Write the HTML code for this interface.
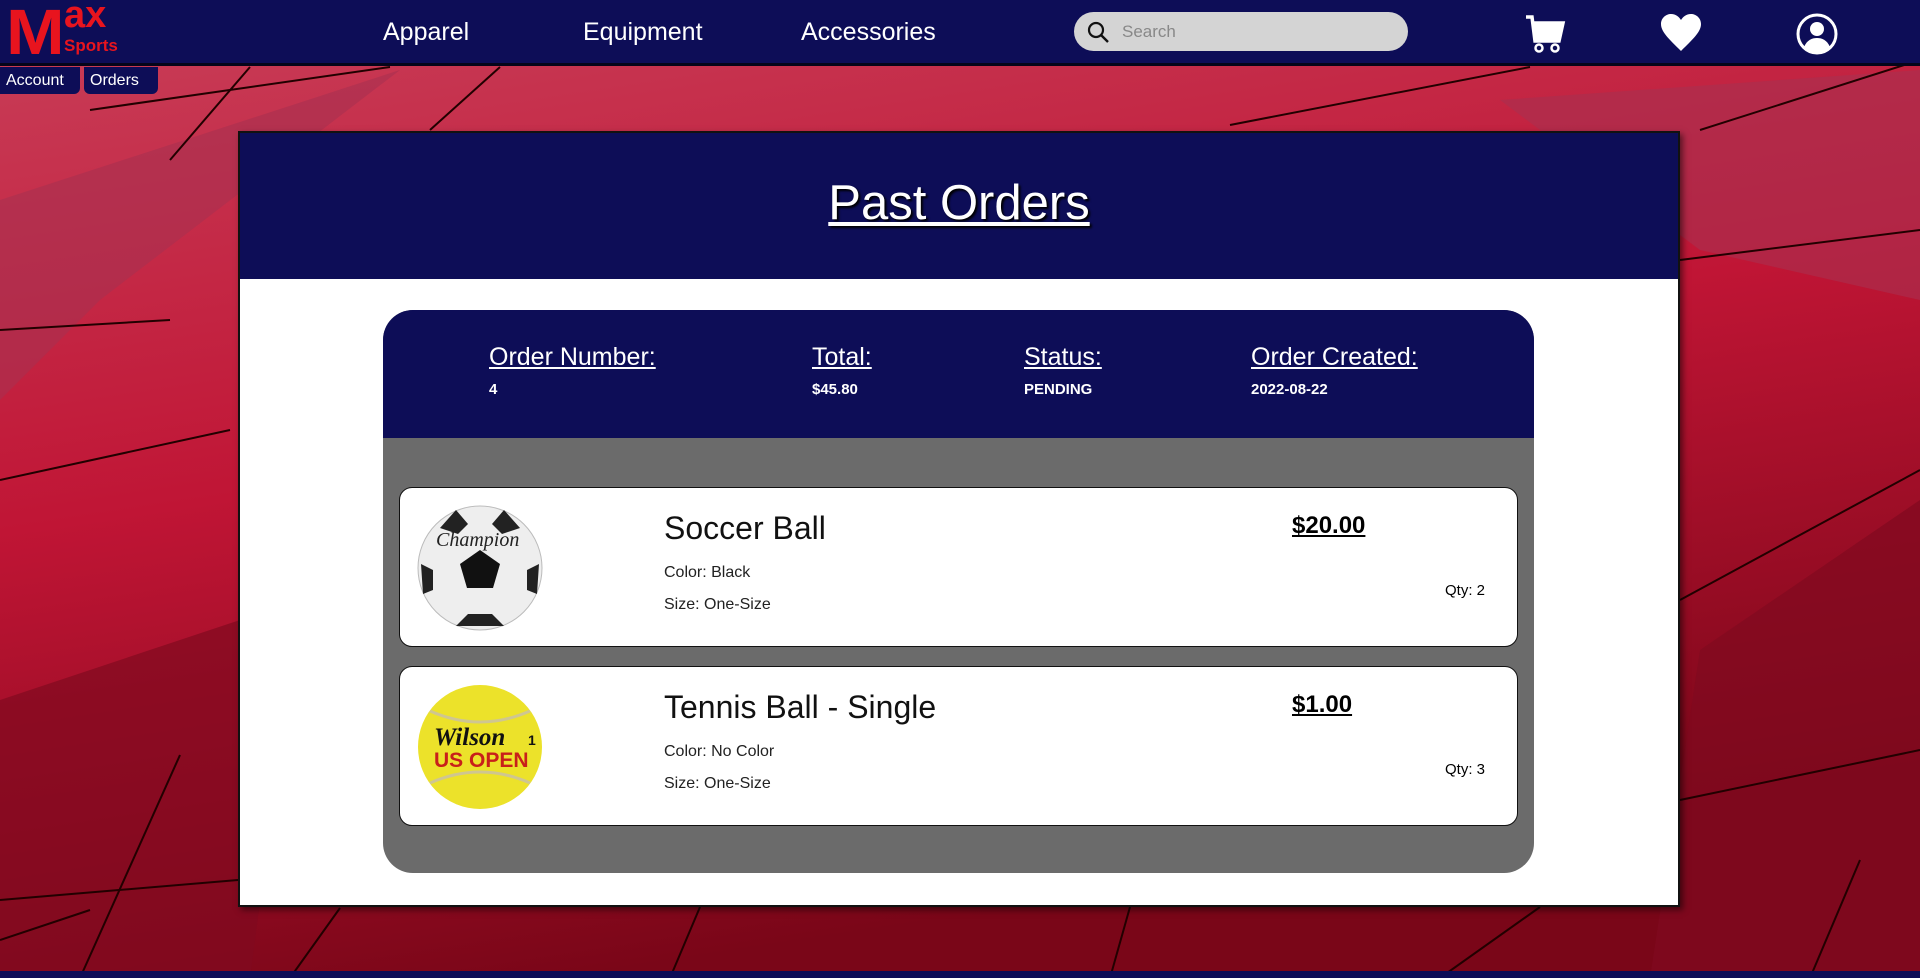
<!DOCTYPE html>
<html><head><meta charset="utf-8"><style>
*{margin:0;padding:0;box-sizing:border-box}
body{width:1920px;height:978px;overflow:hidden;font-family:"Liberation Sans",sans-serif;position:relative;background:#b0173a}
.bg{position:absolute;left:0;top:0}
nav{position:absolute;left:0;top:0;width:1920px;height:66px;background:#0d0d57;border-bottom:3px solid #05051a}
.navl{position:absolute;top:18px;color:#fff;font-size:25px}
.search{position:absolute;left:1074px;top:12px;width:334px;height:39px;background:#d4d4d4;border-radius:20px}
.search span{position:absolute;left:48px;top:10px;color:#888;font-size:17px}
.bc{position:absolute;top:67px;height:27px;background:#0d0d57;color:#fff;font-size:16px;line-height:27px;padding:0 6px}
.card{position:absolute;left:238px;top:131px;width:1442px;height:776px;background:#fff;border:2px solid #111;box-shadow:3px 3px 6px rgba(0,0,0,.5)}
.ch{height:146px;background:#0d0d57;text-align:center}
.ch h1{font-weight:normal;color:#fff;font-size:49px;text-decoration:underline;padding-top:42px;text-shadow:2px 2px 2px #000}
.ob{position:absolute;left:143px;top:177px;width:1151px;height:563px;background:#6b6b6b;border-radius:30px;overflow:hidden}
.oh{height:128px;background:#0d0d57;position:relative;color:#fff}
.lab{position:absolute;top:33px;font-size:25px;text-decoration:underline}
.val{position:absolute;top:71px;font-size:15px;font-weight:bold}
.item{position:absolute;left:16px;width:1119px;height:160px;background:#fff;border:1.5px solid #111;border-radius:13px}
.nm{position:absolute;left:264px;top:22px;font-size:32px;color:#111}
.d{position:absolute;left:264px;font-size:16px;color:#222}
.pr{position:absolute;top:24px;font-size:24px;font-weight:bold;text-decoration:underline}
.q{position:absolute;right:32px;top:94px;font-size:15px}
</style></head><body>
<svg class="bg" width="1920" height="978">
<defs><linearGradient id="g" x1="0" y1="0" x2="0.3" y2="1"><stop offset="0" stop-color="#c9405a"/><stop offset=".5" stop-color="#c01535"/><stop offset="1" stop-color="#7a0618"/></linearGradient></defs>
<rect width="1920" height="978" fill="url(#g)"/>
<polygon points="0,200 400,70 100,300 0,400" fill="#a83050" opacity=".6"/>
<polygon points="1500,100 1920,70 1920,300 1700,250" fill="#a83050" opacity=".6"/>
<polygon points="0,700 300,600 250,978 0,978" fill="#800a20" opacity=".7"/>
<polygon points="1700,650 1920,500 1920,978 1650,978" fill="#800a20" opacity=".7"/>
<g stroke="#200" stroke-width="2" fill="none">
<line x1="90" y1="110" x2="390" y2="67"/><line x1="250" y1="67" x2="170" y2="160"/><line x1="500" y1="67" x2="430" y2="130"/>
<line x1="0" y1="330" x2="170" y2="320"/><line x1="0" y1="480" x2="230" y2="430"/><line x1="0" y1="940" x2="90" y2="910"/>
<line x1="180" y1="755" x2="80" y2="978"/><line x1="0" y1="900" x2="238" y2="880"/><line x1="340" y1="908" x2="290" y2="978"/>
<line x1="1230" y1="125" x2="1530" y2="67"/><line x1="1700" y1="130" x2="1920" y2="60"/><line x1="1680" y1="260" x2="1920" y2="230"/>
<line x1="1680" y1="600" x2="1920" y2="470"/><line x1="1680" y1="800" x2="1920" y2="750"/><line x1="1860" y1="860" x2="1810" y2="978"/>
<line x1="1540" y1="907" x2="1440" y2="978"/><line x1="700" y1="907" x2="670" y2="978"/><line x1="1130" y1="907" x2="1110" y2="978"/>
</g>
<rect y="971" width="1920" height="7" fill="#0d0d57"/>
</svg>
<nav>
<div style="position:absolute;left:6px;top:0px;color:#e8141e;font-weight:bold;font-size:64px;line-height:64px;transform:scaleX(1.1);transform-origin:left">M</div>
<div style="position:absolute;left:64px;top:-4px;color:#e8141e;font-weight:bold;font-size:38px;line-height:38px">ax</div>
<div style="position:absolute;left:64px;top:36px;color:#e8141e;font-weight:bold;font-size:17px">Sports</div>
<div class="navl" style="left:383px">Apparel</div>
<div class="navl" style="left:583px">Equipment</div>
<div class="navl" style="left:801px">Accessories</div>
<div class="search"><svg style="position:absolute;left:12px;top:8px" width="24" height="24"><circle cx="10" cy="10" r="7" stroke="#111" stroke-width="2.2" fill="none"/><line x1="15" y1="15" x2="22" y2="22" stroke="#111" stroke-width="2.4"/></svg><span>Search</span></div>
<svg style="position:absolute;left:1524px;top:14px" width="42" height="40"><path d="M2 3h6l3 24h24l4-18H10" fill="none" stroke="#fff" stroke-width="3.5"/><path d="M10 9h29l-4 18H12z" fill="#fff"/><circle cx="15" cy="34" r="3.5" fill="none" stroke="#fff" stroke-width="2.5"/><circle cx="31" cy="34" r="3.5" fill="none" stroke="#fff" stroke-width="2.5"/></svg>
<svg style="position:absolute;left:1659px;top:13px" width="44" height="40"><path d="M22 38C10 26 2 19 2 11 2 5 7 1 12 1c5 0 8 3 10 6 2-3 5-6 10-6 5 0 10 4 10 10 0 8-8 15-20 27z" fill="#fff"/></svg>
<svg style="position:absolute;left:1795px;top:12px" width="44" height="44"><circle cx="22" cy="22" r="19" fill="none" stroke="#fff" stroke-width="3"/><circle cx="22" cy="17" r="7" fill="#fff"/><path d="M9 35c3-7 8-9 13-9s10 2 13 9c-4 4-8 5-13 5s-9-1-13-5z" fill="#fff"/></svg>
</nav>
<div class="bc" style="left:0;width:80px;border-radius:0 0 6px 0">Account</div>
<div class="bc" style="left:84px;width:74px;border-radius:0 0 6px 6px">Orders</div>
<div class="card">
<div class="ch"><h1>Past Orders</h1></div>
<div class="ob">
<div class="oh">
<div class="lab" style="left:106px">Order Number:</div><div class="val" style="left:106px">4</div>
<div class="lab" style="left:429px">Total:</div><div class="val" style="left:429px">$45.80</div>
<div class="lab" style="left:641px">Status:</div><div class="val" style="left:641px">PENDING</div>
<div class="lab" style="left:868px">Order Created:</div><div class="val" style="left:868px">2022-08-22</div>
</div>
<div class="item" style="top:177px">
<svg style="position:absolute;left:16px;top:16px" width="128" height="128"><circle cx="64" cy="64" r="62" fill="#eee" stroke="#bbb"/><polygon points="64,46 84,60 77,84 51,84 44,60" fill="#111"/><path d="M40 6 l12 14 -10 10 -18-6z M88 6 l-12 14 10 10 18-6z M5 60 l12 6 0 20 -10 4z M123 60 l-12 6 0 20 10 4z M40 122 l12-12 24 0 12 12z" fill="#222"/><text x="20" y="42" font-family="Liberation Serif" font-style="italic" font-size="20" fill="#222">Champion</text></svg>
<div class="nm">Soccer Ball</div>
<div class="d" style="top:76px">Color: Black</div>
<div class="d" style="top:108px">Size: One-Size</div>
<div class="pr" style="left:892px">$20.00</div>
<div class="q">Qty: 2</div>
</div>
<div class="item" style="top:356px">
<svg style="position:absolute;left:16px;top:16px" width="128" height="128"><circle cx="64" cy="64" r="62" fill="#ece22a"/><path d="M14 28 Q64 50 114 28 M14 100 Q64 78 114 100" stroke="#cfc690" stroke-width="3" fill="none"/><text x="18" y="62" font-family="Liberation Serif" font-weight="bold" font-style="italic" font-size="25" fill="#111">Wilson</text><text x="112" y="62" font-size="14" font-weight="bold" fill="#111">1</text><text x="18" y="84" font-weight="bold" font-size="21" fill="#c8201a">US OPEN</text></svg>
<div class="nm">Tennis Ball - Single</div>
<div class="d" style="top:76px">Color: No Color</div>
<div class="d" style="top:108px">Size: One-Size</div>
<div class="pr" style="left:892px">$1.00</div>
<div class="q">Qty: 3</div>
</div>
</div>
</div>
</body></html>
